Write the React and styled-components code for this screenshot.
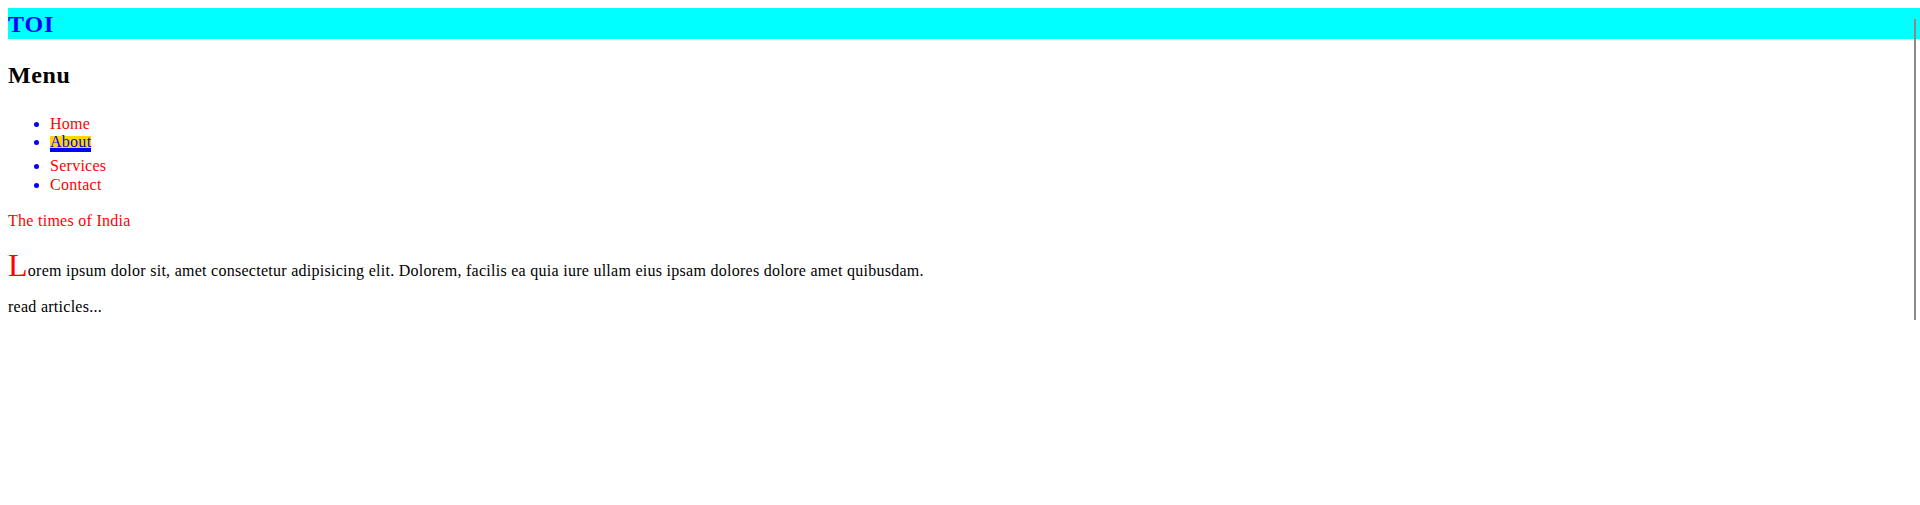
import React from 'react'
import styled, { createGlobalStyle } from 'styled-components'

const GlobalStyle = createGlobalStyle`
  html, body {
    margin: 0;
    padding: 0;
    background: white;
  }
  body {
    padding: 8px;
    font-family: "Liberation Serif", "Times New Roman", serif;
    font-size: 16px;
    line-height: 18.7px;
    letter-spacing: 0.27px;
    color: black;
  }
`

const Header = styled.header`
  height: 30px;
  padding-top: 1px;
  line-height: 31px;
  margin-right: -8px;
  background: cyan;
  color: blue;
  font-size: 24px;
  font-weight: bold;
  letter-spacing: 0.9px;
`

const ScrollLine = styled.div`
  position: absolute;
  top: 19px;
  right: 4px;
  width: 2px;
  height: 301px;
  background: #8a8a8a;
`

const MenuTitle = styled.h2`
  margin: 23px 0 25px;
  font-size: 24px;
  line-height: 27.6px;
  letter-spacing: 0.6px;
`

const NavList = styled.ul`
  margin: 0;
  padding-left: 42px;
  li::marker {
    color: blue;
  }
`

const NavItem = styled.li`
  color: red;
`

const Active = styled.span`
  display: inline-block;
  line-height: 12px;
  margin-top: 2px;
  margin-bottom: 5px;
  background: gold;
  color: blue;
  border-bottom: 4px solid blue;
`

const Tagline = styled.p`
  margin: 17px 0 0;
  color: red;
`

const Lead = styled.p`
  margin: 17px 0 0;
  span {
    font-size: 32px;
    line-height: normal;
    color: red;
  }
`

const More = styled.p`
  margin: 14px 0 0;
`

const links = ['Home', 'About', 'Services', 'Contact']

export default function App() {
  return (
    <>
      <GlobalStyle />
      <ScrollLine />
      <Header>TOI</Header>
      <MenuTitle>Menu</MenuTitle>
      <NavList>
        {links.map(link => (
          <NavItem key={link}>
            {link === 'About' ? <Active>{link}</Active> : link}
          </NavItem>
        ))}
      </NavList>
      <Tagline>The times of India</Tagline>
      <Lead>
        <span>L</span>orem ipsum dolor sit, amet consectetur adipisicing elit. Dolorem, facilis ea quia iure ullam eius ipsam dolores dolore amet quibusdam.
      </Lead>
      <More>read articles...</More>
    </>
  )
}
